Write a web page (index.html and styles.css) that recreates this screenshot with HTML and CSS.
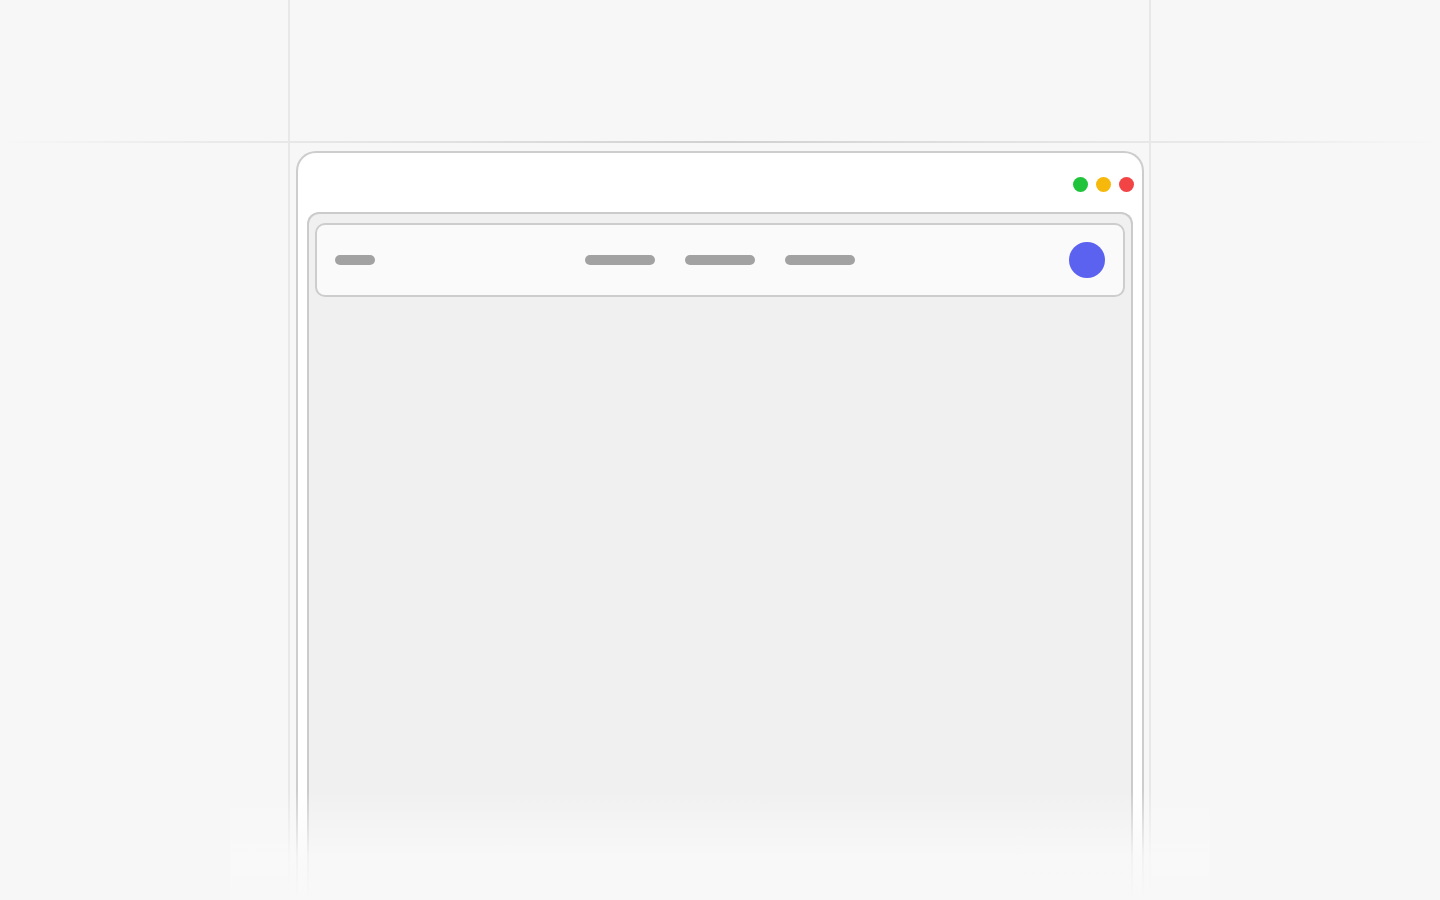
FILE: index.html
```html
<html>
<head>
    <title>Wireframe</title>
    <link rel="stylesheet" href="styles.css">
</head>
<body>
    <div class="guide guide-left"></div>
    <div class="guide guide-right"></div>
    <div class="guide guide-top"></div>

    <section class="stage">
        <div class="window">
            <div class="titlebar">
                <span class="dot green"></span>
                <span class="dot yellow"></span>
                <span class="dot red"></span>
            </div>
            <div class="frame">
                <div class="navbar">
                    <div class="logo"><span class="bar bar-short"></span></div>
                    <div class="links">
                        <span class="bar"></span>
                        <span class="bar"></span>
                        <span class="bar"></span>
                    </div>
                    <div class="account"><span class="avatar"></span></div>
                </div>
            </div>
        </div>
    </section>

    <div class="fade"></div>
</body>
</html>
```

FILE: styles.css
```css
* {
    box-sizing: border-box;
    font-family: "Inter", "Liberation Sans", sans-serif;
}
body {
    margin: 0;
    height: 900px;
    overflow: hidden;
    background-color: #f7f7f7;
    position: relative;
}

/* decorative guide lines */
.guide {
    position: absolute;
    background-color: #e8e8e8;
}
.guide-left, .guide-right {
    top: 0;
    bottom: 0;
    width: 2px;
}
.guide-left { left: 288px; }
.guide-right { left: 1149px; }
.guide-top {
    top: 141px;
    left: 0;
    right: 0;
    height: 2px;
    background: linear-gradient(to right, rgba(232,232,232,0) 0%, #ececec 12%, #e2e2e2 30%, #d0d0d0 50%, #e2e2e2 70%, #ececec 88%, rgba(232,232,232,0) 100%);
}

.stage {
    padding-top: 151px;
    display: flex;
    justify-content: center;
    height: 900px;
}
.window {
    width: 848px;
    height: 749px;
    background-color: #ffffff;
    border: 2px solid #cdcdcd;
    border-bottom: none;
    border-radius: 20px 20px 0 0;
    padding: 0 9px;
    display: flex;
    flex-direction: column;
}
.titlebar {
    height: 59px;
    padding-top: 24px;
    margin-right: -1px;
    display: flex;
    justify-content: flex-end;
    gap: 8px;
}
.dot {
    width: 15px;
    height: 15px;
    border-radius: 50%;
}
.green { background-color: #1fc43a; }
.yellow { background-color: #f6b80a; }
.red { background-color: #f24444; }

.frame {
    flex: 1;
    background-color: #f0f0f0;
    border: 2px solid #cbcbcb;
    border-bottom: none;
    border-radius: 12px 12px 0 0;
    padding: 9px 6px 0;
}
.navbar {
    height: 74px;
    background-color: #fafafa;
    border: 2px solid #cdcdcd;
    border-radius: 10px;
    padding: 0 18px;
    display: grid;
    grid-template-columns: 1fr auto 1fr;
    align-items: center;
}
.links {
    display: flex;
    gap: 30px;
}
.bar {
    display: block;
    width: 70px;
    height: 10px;
    border-radius: 5px;
    background-color: #a2a2a2;
}
.bar-short { width: 40px; }
.account {
    display: flex;
    justify-content: flex-end;
}
.avatar {
    width: 36px;
    height: 36px;
    border-radius: 50%;
    background-color: #5a62ef;
}

.fade {
    position: absolute;
    left: 230px;
    width: 980px;
    top: 790px;
    height: 110px;
    background: linear-gradient(to bottom, rgba(249,249,249,0) 0%, rgba(249,249,249,0.85) 60%, #f8f8f8 100%);
}
```
